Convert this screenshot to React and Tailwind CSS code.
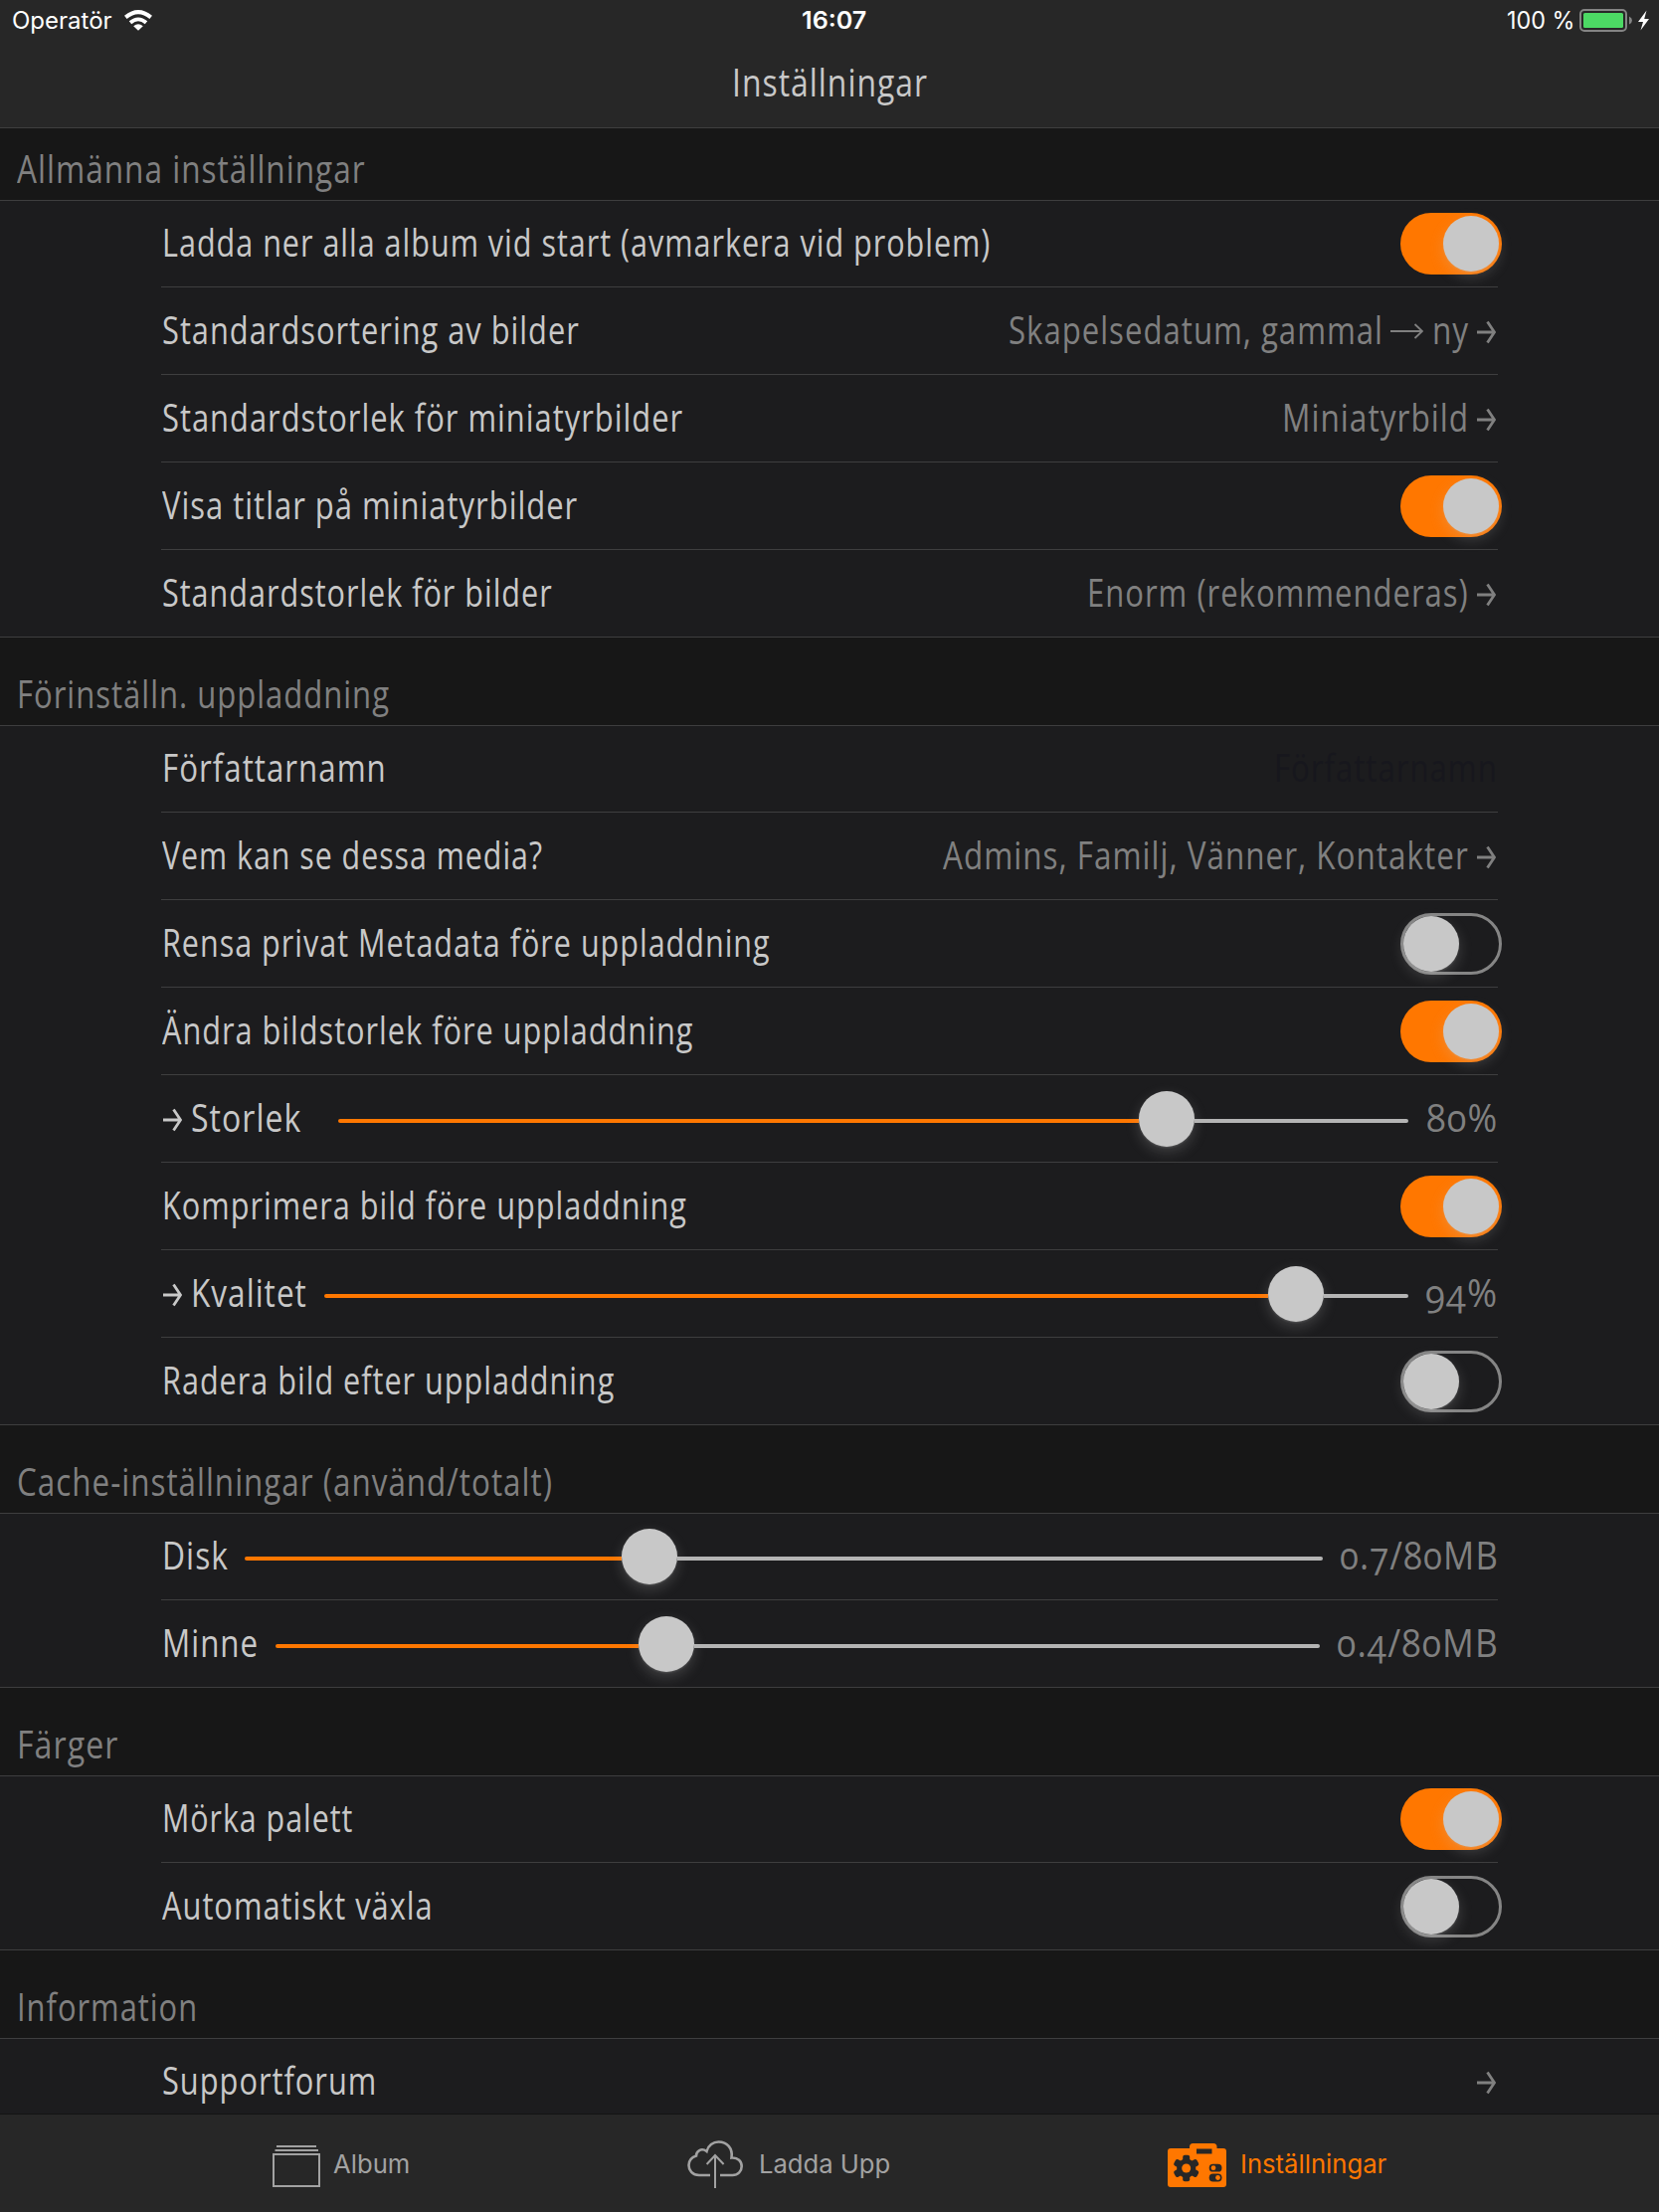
import { useLayoutEffect, useRef, useState } from "react";

// Text whose glyphs are condensed or widened to fill a given width.
function Fit({ w, children, className = "" }) {
  const ref = useRef(null);
  const [scale, setScale] = useState(1);
  useLayoutEffect(() => {
    setScale(w / ref.current.offsetWidth);
  }, [w, children]);
  return (
    <span className={`block shrink-0 ${className}`} style={{ width: w }}>
      <span ref={ref} className="block w-max origin-left whitespace-pre" style={{ transform: `scaleX(${scale})` }}>
        {children}
      </span>
    </span>
  );
}

function Arrow({ className = "" }) {
  return (
    <svg viewBox="0 0 19 24" className={`h-6 w-[19px] shrink-0 fill-none stroke-current stroke-[2.8] ${className}`}>
      <path d="M0 12H17M10.5 1.5L17.5 12L10.5 22.5" />
    </svg>
  );
}

function LongArrow() {
  return (
    <svg viewBox="0 0 33 18" className="mr-[9px] ml-[7px] h-[18px] w-[33px] shrink-0 fill-none stroke-current stroke-[1.8]">
      <path d="M0 9H32M24.500 2L32 9L24.500 16" />
    </svg>
  );
}

const knob = "size-14 rounded-full bg-[#c8c8c8] shadow-[0_5px_14px_rgba(200,200,200,0.22),0_1px_2px_rgba(200,200,200,0.2)]";

function Toggle({ on }) {
  return on ? (
    <div className="-mr-1 ml-auto flex h-[62px] w-[102px] shrink-0 items-center justify-end rounded-full bg-[#ff7700] pr-[3px]">
      <div className={knob} />
    </div>
  ) : (
    <div className="-mr-1 ml-auto flex h-[62px] w-[102px] shrink-0 items-center rounded-full border-[3px] border-[#858585]">
      <div className={knob} />
    </div>
  );
}

function Slider({ gap, w, fill, end }) {
  return (
    <div className="flex h-14 shrink-0 items-center" style={{ width: w, marginLeft: gap, marginRight: end }}>
      <div className="mt-1 h-1 rounded-l-full bg-[#ff7700]" style={{ width: fill }} />
      <div className={`${knob} shrink-0`} />
      <div className="mt-1 h-1 flex-1 rounded-r-full bg-[#b4b4b4]" />
    </div>
  );
}

function Row({ label, w, arrow, last, children }) {
  return (
    <div className={`mx-[162px] flex h-[88px] items-center text-[#c8c8c8] ${last ? "" : "shadow-[inset_0_-1px_0_#3e3e3f]"}`}>
      {arrow && <Arrow className="mr-[9px] ml-[2px] mt-[2px]" />}
      <Fit w={w} className={`-mt-[2px] leading-[84px] ${arrow ? "" : "ml-[1px]"}`}>{label}</Fit>
      {children}
    </div>
  );
}

function Value({ parts, w, arrow = true, className = "pr-[2px] text-[#808080]", children }) {
  return (
    <div className={`ml-auto flex items-center ${className}`}>
      {w && <Fit w={w} className="-mt-[2px] leading-[84px]">{parts}</Fit>}
      {children}
      {arrow && <Arrow className="ml-[8px] mt-[2px]" />}
    </div>
  );
}

function Amount({ w, children }) {
  return <Fit w={w} className="-mt-[2px] leading-[84px] text-[#808080]">{children}</Fit>;
}

function Header({ w, first, children }) {
  return (
    <div className={`flex shrink-0 items-end pl-[17px] text-[#808080] ${first ? "h-[72px]" : "h-[88px]"}`}>
      <Fit w={w} className="mb-[5px] leading-[52px]">{children}</Fit>
    </div>
  );
}

function Group({ children }) {
  return (
    <div className="shrink-0 bg-[#1c1c1e] shadow-[inset_0_1px_0_#3e3e3f,inset_0_-1px_0_#3e3e3f]">{children}</div>
  );
}

function GearCase() {
  return (
    <svg viewBox="0 0 59 44" className="h-11 w-[59px]">
      <path fill="#ff7700" d="M3 5H22V3.500Q22 0 25.500 0H46Q49.500 0 49.500 3.500V5H56Q59 5 59 8V41Q59 44 56 44H3Q0 44 0 41V8Q0 5 3 5Z" />
      <rect x="29" y="5.500" width="15.500" height="5" fill="#272727" />
      <g fill="#272727">
        <circle cx="18.700" cy="25" r="9.600" />
        <rect x="15.200" y="11.700" width="7" height="26.600" rx="2" />
        <rect x="15.200" y="11.700" width="7" height="26.600" rx="2" transform="rotate(60 18.700 25)" />
        <rect x="15.200" y="11.700" width="7" height="26.600" rx="2" transform="rotate(-60 18.700 25)" />
        <rect x="41.700" y="20.800" width="12.800" height="7.800" rx="3.900" />
        <rect x="41.700" y="30.600" width="12.800" height="7.800" rx="3.900" />
      </g>
      <g fill="#ff7700">
        <circle cx="18.700" cy="25" r="4.500" />
        <circle cx="46" cy="24.700" r="2.400" />
        <circle cx="50.500" cy="34.500" r="2.400" />
      </g>
    </svg>
  );
}

export default function App() {
  return (
    <div className="flex h-[2224px] w-[1668px] flex-col overflow-hidden bg-[#171717] font-['Open_Sans',sans-serif] text-[37.500px] tracking-[1.2px] [font-variant-numeric:oldstyle-nums]">
      <header className="flex h-[129px] shrink-0 flex-col bg-[#272727] shadow-[inset_0_-1px_0_#3e3e3f]">
        <div className="flex h-[41px] items-center pl-3 font-['Inter',sans-serif] text-[24px] leading-[41px] tracking-normal text-white">
          <Fit w={101}>Operatör</Fit>
          <svg viewBox="0 0 28 21" className="ml-3 h-[21px] w-7 fill-none stroke-white">
            <path strokeWidth="4" d="M1.300 7.400Q14 -3.200 26.700 7.400" />
            <path strokeWidth="3.800" d="M6 12.800Q14 6 22 12.800" />
            <path fill="white" stroke="none" d="M14 20.800L9.200 16.200Q14 12.400 18.800 16.200Z" />
          </svg>
          <Fit w={65} className="ml-[653px] font-semibold">16:07</Fit>
          <Fit w={68} className="ml-[644px]">100 %</Fit>
          <svg viewBox="0 0 72 24" className="ml-[5px] h-6 w-[72px]">
            <rect x="1" y="1" width="46" height="21" rx="4" fill="none" stroke="#848484" strokeWidth="2" />
            <rect x="4" y="4" width="40" height="15" rx="1.500" fill="#4cd964" />
            <path d="M50 7.500Q53 9 53 11.500T50 15.500Z" fill="#848484" />
            <path d="M67.500 1.500L59 13H64L61.500 21.500L70 10H65.200Z" fill="white" />
          </svg>
        </div>
        <Fit w={197} className="ml-[736px] mt-[16px] leading-[52px] text-[#c8c8c8]">Inställningar</Fit>
      </header>

      <main className="flex min-h-0 flex-1 flex-col overflow-hidden">
        <Header first w={351}>Allmänna inställningar</Header>
        <Group>
          <Row label="Ladda ner alla album vid start (avmarkera vid problem)" w={833}><Toggle on /></Row>
          <Row label="Standardsortering av bilder" w={420}>
            <Value parts="Skapelsedatum, gammal" w={377}>
              <LongArrow />
              <Fit w={37} className="-mt-[2px] leading-[84px]">ny</Fit>
            </Value>
          </Row>
          <Row label="Standardstorlek för miniatyrbilder" w={524}><Value parts="Miniatyrbild" w={188} /></Row>
          <Row label="Visa titlar på miniatyrbilder" w={418}><Toggle on /></Row>
          <Row label="Standardstorlek för bilder" w={393} last><Value parts="Enorm (rekommenderas)" w={384} /></Row>
        </Group>

        <Header w={375}>Förinställn. uppladdning</Header>
        <Group>
          <Row label="Författarnamn" w={226}>
            <Value parts="Författarnamn" w={225} arrow={false} className="text-[#17171d]" />
          </Row>
          <Row label="Vem kan se dessa media?" w={383}><Value parts="Admins, Familj, Vänner, Kontakter" w={529} /></Row>
          <Row label="Rensa privat Metadata före uppladdning" w={612}><Toggle /></Row>
          <Row label="Ändra bildstorlek före uppladdning" w={534}><Toggle on /></Row>
          <Row label="Storlek" w={111} arrow>
            <Slider gap={37} w={1076} fill={805} end={18} />
            <Amount w={72}>80%</Amount>
          </Row>
          <Row label="Komprimera bild före uppladdning" w={528}><Toggle on /></Row>
          <Row label="Kvalitet" w={117} arrow>
            <Slider gap={17} w={1090} fill={949} end={17} />
            <Amount w={73}>94%</Amount>
          </Row>
          <Row label="Radera bild efter uppladdning" w={455} last><Toggle /></Row>
        </Group>

        <Header w={539}>Cache-inställningar (använd/totalt)</Header>
        <Group>
          <Row label="Disk" w={67}>
            <Slider gap={16} w={1084} fill={379} end={17} />
            <Amount w={160}>0.7/80MB</Amount>
          </Row>
          <Row label="Minne" w={97} last>
            <Slider gap={17} w={1050} fill={365} end={17} />
            <Amount w={163}>0.4/80MB</Amount>
          </Row>
        </Group>

        <Header w={102}>Färger</Header>
        <Group>
          <Row label="Mörka palett" w={192}><Toggle on /></Row>
          <Row label="Automatiskt växla" w={273} last><Toggle /></Row>
        </Group>

        <Header w={182}>Information</Header>
        <Group>
          <Row label="Supportforum" w={216}><Value /></Row>
        </Group>
      </main>

      <nav className="flex h-[99px] shrink-0 items-start bg-[#272727] pt-[27px] font-['Inter',sans-serif] text-[26px] leading-[46px] tracking-normal text-[#a2a2a2] shadow-[inset_0_1px_0_#141414]">
        <div className="ml-[274px] flex">
          <svg viewBox="0 0 48 42" className="mt-[5px] h-[42px] w-12 fill-none stroke-current stroke-2">
            <path d="M4 1H44M2.500 5H46M1 9H47V41H1Z" />
          </svg>
          <Fit w={77} className="ml-[13px] mt-[1px]">Album</Fit>
        </div>
        <div className="ml-[279px] flex">
          <svg viewBox="0 0 56 48" className="h-12 w-14 fill-none stroke-current stroke-[2.600]">
            <path d="M23 35H12C5 35 1.500 30 1.500 25C1.500 20 4.500 17 9 15.500C9 11 14 7 19.500 11C21 5 26 1.500 31.500 1.500C40 1.500 46 8 44.500 17.500C51 17 54.700 21 54.700 26C54.700 31 51 35 45.500 35H33" />
            <path strokeWidth="2" d="M28 48V15.500M19.600 24L28 15L36.600 24" />
          </svg>
          <Fit w={132} className="ml-4 mt-[1px]">Ladda Upp</Fit>
        </div>
        <div className="ml-[279px] flex text-[#ff7700]">
          <div className="mt-[3px]"><GearCase /></div>
          <Fit w={147} className="ml-[14px] mt-[1px]">Inställningar</Fit>
        </div>
      </nav>
    </div>
  );
}
